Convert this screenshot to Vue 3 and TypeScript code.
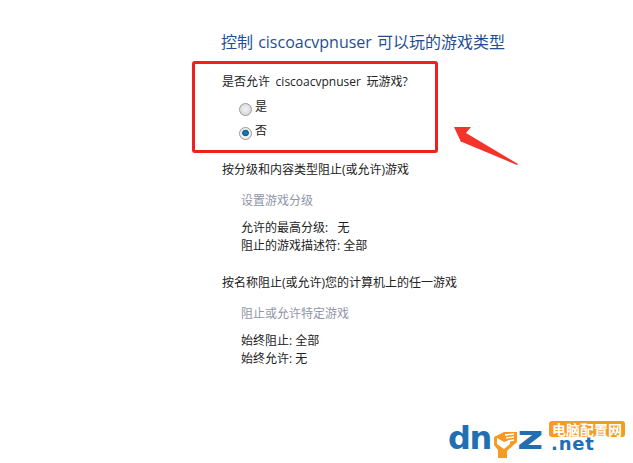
<script setup lang="ts">
interface GameSection {
  heading: string
  link: string
  lines: string[]
}

const sections: GameSection[] = [
  {
    heading: '按分级和内容类型阻止(或允许)游戏',
    link: '设置游戏分级',
    lines: ['允许的最高分级:   无', '阻止的游戏描述符: 全部'],
  },
  {
    heading: '按名称阻止(或允许)您的计算机上的任一游戏',
    link: '阻止或允许特定游戏',
    lines: ['始终阻止: 全部', '始终允许: 无'],
  },
]
</script>

<template>
  <div class="page">
    <main class="content">
      <h1 class="title">控制 ciscoacvpnuser 可以玩的游戏类型</h1>
      <div class="highlight">
        <p class="question">是否允许 ciscoacvpnuser 玩游戏?</p>
        <div class="options">
          <div class="option"><span class="radio"></span>是</div>
          <div class="option"><span class="radio checked"></span>否</div>
        </div>
      </div>
      <section v-for="s in sections" :key="s.heading" class="section">
        <p class="heading">{{ s.heading }}</p>
        <p class="link">{{ s.link }}</p>
        <p v-for="l in s.lines" :key="l" class="line">{{ l }}</p>
      </section>
    </main>

    <svg class="arrow" width="70" height="44" viewBox="0 0 70 44">
      <polygon points="1,1 18,1 13,7 65,38 64,39 9,16 8,16" fill="#f4342a" />
    </svg>

    <footer class="logo">
      <span class="brand">dn</span>
      <svg class="mark" width="24" height="27" viewBox="0 0 24 27">
        <path d="M1 6 L11 1 L24 1 L24 11 L14 20 L14 27 L5 27 L5 19 L1 14 Z" fill="#f59a23" />
        <path d="M12 4 L21 3 M13 7 L21 6 M15 10 L21 9" stroke="#fff" stroke-width="1.4" fill="none" />
        <path d="M4 7 L11 11 L17 9 L17 13 L11 18 L4 13 Z" fill="#fff" />
      </svg>
      <span class="brand wide">z</span>
      <div class="logo-side">
        <span class="badge">电脑配置网</span>
        <span class="net">.net</span>
      </div>
    </footer>
  </div>
</template>

<style>
html,
body {
  margin: 0;
  background: #fff;
}
</style>

<style scoped>
.page {
  position: relative;
  width: 633px;
  height: 463px;
  overflow: hidden;
  background: #fff;
  font-family: "Open Sans", "Noto Sans CJK SC", sans-serif;
  font-size: 12px;
  color: #222;
  white-space: pre;
}

.content {
  display: flex;
  flex-direction: column;
  padding: 32px 0 0 192px;
}

p,
h1 {
  margin: 0;
  font-weight: 400;
}

.title {
  padding-left: 29px;
  height: 21px;
  font-size: 16px;
  line-height: 21px;
  color: #1f4e92;
  word-spacing: 1px;
}

.highlight {
  box-sizing: border-box;
  width: 246px;
  height: 92px;
  margin-top: 8px;
  padding: 9px 0 0 27px;
  border: 3px solid #f0201c;
  border-radius: 3px;
}

.question {
  line-height: 18px;
  word-spacing: 2.5px;
}

.options {
  display: flex;
  flex-direction: column;
  gap: 6px;
  margin-top: 7px;
  padding-left: 17px;
}

.option {
  display: flex;
  align-items: center;
  gap: 3px;
  height: 18px;
  line-height: 18px;
  font-size: 12px;
}

.radio {
  box-sizing: border-box;
  width: 13px;
  height: 13px;
  margin-top: 4px;
  border: 1px solid #9a9a9a;
  border-radius: 50%;
  background: radial-gradient(circle at 50% 45%, #f4f4f4, #cfcfcf);
}

.radio.checked {
  background:
    radial-gradient(circle at 50% 45%, #1a86c0 0, #0d5f94 3px, transparent 3.6px),
    #eee;
}

.section {
  display: flex;
  flex-direction: column;
  padding-left: 30px;
}

.highlight + .section {
  margin-top: 8px;
}

.section + .section {
  margin-top: 19px;
}

.heading {
  line-height: 18px;
}

.link {
  margin-top: 13px;
  padding-left: 19px;
  line-height: 18px;
  color: #8f95a8;
}

.line {
  padding-left: 19px;
  line-height: 18px;
}

.link + .line {
  margin-top: 9px;
}

.arrow {
  position: absolute;
  left: 453px;
  top: 126px;
}

.logo {
  position: absolute;
  left: 448px;
  top: 421px;
  width: 177px;
  display: flex;
  align-items: flex-start;
}

.brand {
  margin-top: 3px;
  font-family: "DejaVu Sans", sans-serif;
  font-size: 32px;
  font-weight: 700;
  line-height: 28px;
  letter-spacing: -1.5px;
  color: #1f6fb2;
}

.brand.wide {
  width: 25px;
  transform: scaleX(1.42);
  transform-origin: left center;
  letter-spacing: 0;
}

.mark {
  flex: none;
  margin: 10px 0 0 2px;
}

.logo-side {
  display: flex;
  flex-direction: column;
  margin-left: auto;
}

.badge {
  width: 76px;
  box-sizing: border-box;
  border-radius: 3px;
  background: #f59a23;
  color: #fff;
  text-align: center;
  font-family: "Noto Sans CJK SC", sans-serif;
  font-size: 14px;
  font-weight: 700;
  line-height: 16px;
}

.net {
  margin-left: 2px;
  font-family: "DejaVu Sans", sans-serif;
  font-size: 18px;
  font-weight: 700;
  line-height: 13px;
  letter-spacing: 0.8px;
  color: #1f6fb2;
}
</style>
